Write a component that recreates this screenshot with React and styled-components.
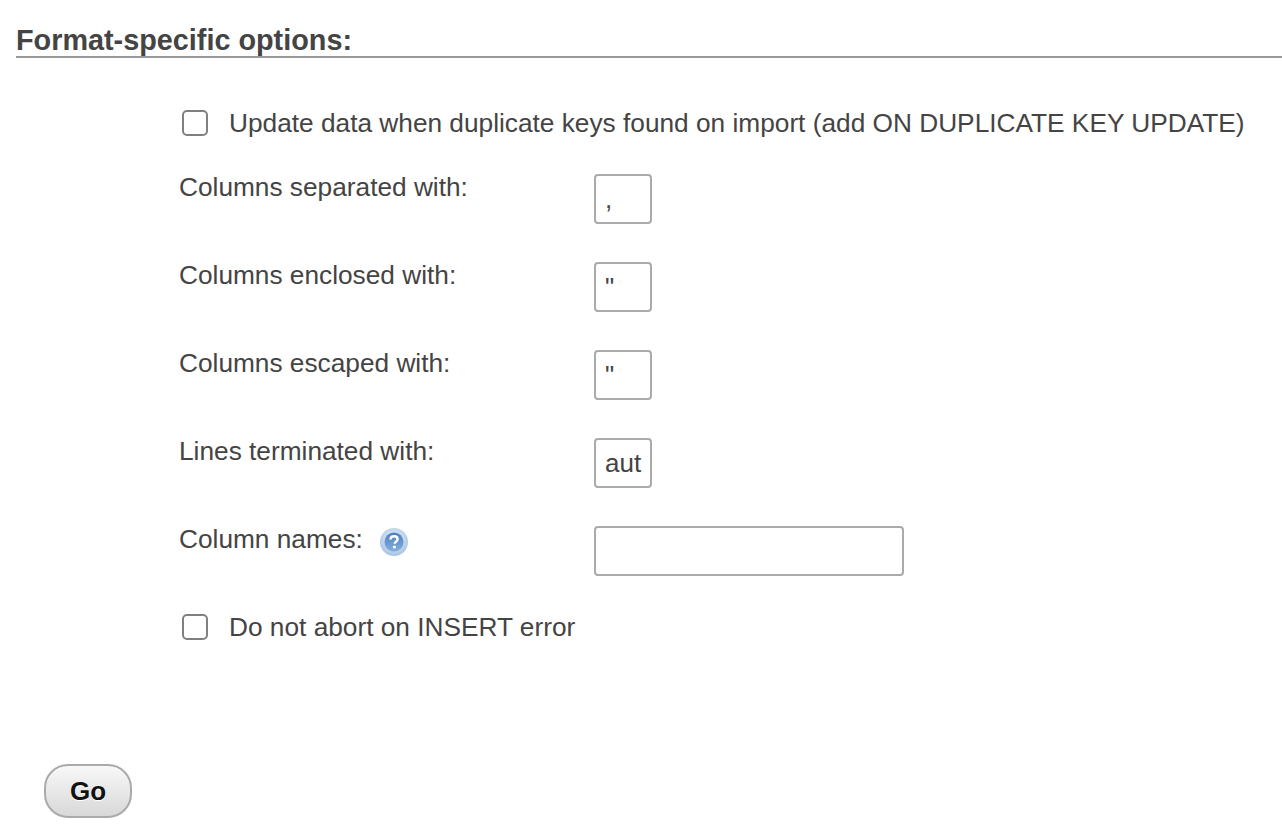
import React from 'react';
import styled, { createGlobalStyle } from 'styled-components';

const GlobalStyle = createGlobalStyle`
  html, body {
    margin: 0;
    background: #ffffff;
    font-family: "Liberation Sans", Arial, sans-serif;
    color: #444444;
  }
`;

const Page = styled.div`
  width: 1282px;
  height: 836px;
  overflow: hidden;
  padding: 24px 0 0 16px;
  box-sizing: border-box;
`;

const Heading = styled.h2`
  margin: 0;
  height: 32px;
  font-size: 28.8px;
  line-height: 32px;
  font-weight: bold;
  color: #444444;
  border-bottom: 2px solid #999999;
`;

const Options = styled.div`
  display: flex;
  flex-direction: column;
  padding: 49px 0 0 163px;
`;

const CheckRow = styled.label`
  display: flex;
  align-items: center;
  height: 32px;
  padding-left: 3px;
  font-size: 26.25px;
  margin-bottom: ${(p) => p.$after || 0}px;
`;

const CheckBox = styled.span`
  width: 22px;
  height: 22px;
  margin-right: 21px;
  border: 2px solid #808080;
  border-radius: 5px;
  background: #ffffff;
`;

const FieldRow = styled.div`
  display: grid;
  grid-template-columns: 415px auto;
  align-items: start;
  height: ${(p) => p.$height || 88}px;
`;

const FieldLabel = styled.div`
  display: flex;
  align-items: flex-start;
  font-size: 26.25px;
  line-height: 26px;
`;

const TextBox = styled.div`
  box-sizing: border-box;
  width: ${(p) => p.$width || 58}px;
  height: 50px;
  padding: 0 9px;
  border: 2px solid #aaaaaa;
  border-radius: 4px;
  font-size: 26px;
  line-height: 46px;
  color: #444444;
  background: #ffffff;
`;

const HelpIcon = styled.svg`
  width: 30px;
  height: 30px;
  margin: 1px 0 0 16px;
`;

const GoButton = styled.button`
  display: block;
  box-sizing: border-box;
  width: 88px;
  height: 54px;
  margin: 121px 0 0 28px;
  padding: 0;
  border: 2px solid #aaaaaa;
  border-radius: 24px;
  background: linear-gradient(#f8f8f8, #d8d8d8);
  font-family: "Liberation Sans", Arial, sans-serif;
  font-size: 26px;
  font-weight: bold;
  color: #111111;
  text-shadow: 0 1px 0 #ffffff;
`;

const Help = () => (
  <HelpIcon viewBox="0 0 30 30" aria-hidden="true">
    <defs>
      <radialGradient id="ring" cx="50%" cy="40%" r="60%">
        <stop offset="0%" stopColor="#eef4fb" />
        <stop offset="100%" stopColor="#a8c3e3" />
      </radialGradient>
      <linearGradient id="core" x1="0" y1="0" x2="0" y2="1">
        <stop offset="0%" stopColor="#4a80c0" />
        <stop offset="100%" stopColor="#86aedd" />
      </linearGradient>
    </defs>
    <circle cx="15" cy="15" r="14" fill="url(#ring)" />
    <circle cx="15" cy="15" r="9.5" fill="url(#core)" />
    <path d="M11.5 12.5c0-2 1.6-3.2 3.6-3.2s3.5 1.2 3.5 3c0 2.4-3 2.4-3 4.4" fill="none" stroke="#ffffff" strokeWidth="2.4" />
    <circle cx="15.4" cy="20" r="1.6" fill="#ffffff" />
  </HelpIcon>
);

const fields = [
  { label: 'Columns separated with:', value: ',' },
  { label: 'Columns enclosed with:', value: '"' },
  { label: 'Columns escaped with:', value: '"' },
  { label: 'Lines terminated with:', value: 'aut' },
];

const App = () => (
  <Page>
    <GlobalStyle />
    <Heading>Format-specific options:</Heading>
    <Options>
      <CheckRow $after={35}>
        <CheckBox />
        Update data when duplicate keys found on import (add ON DUPLICATE KEY UPDATE)
      </CheckRow>
      {fields.map((f) => (
        <FieldRow key={f.label}>
          <FieldLabel>{f.label}</FieldLabel>
          <TextBox>{f.value}</TextBox>
        </FieldRow>
      ))}
      <FieldRow $height={85}>
        <FieldLabel>
          Column names:
          <Help />
        </FieldLabel>
        <TextBox $width={310} />
      </FieldRow>
      <CheckRow>
        <CheckBox />
        Do not abort on INSERT error
      </CheckRow>
    </Options>
    <GoButton>Go</GoButton>
  </Page>
);

export default App;
